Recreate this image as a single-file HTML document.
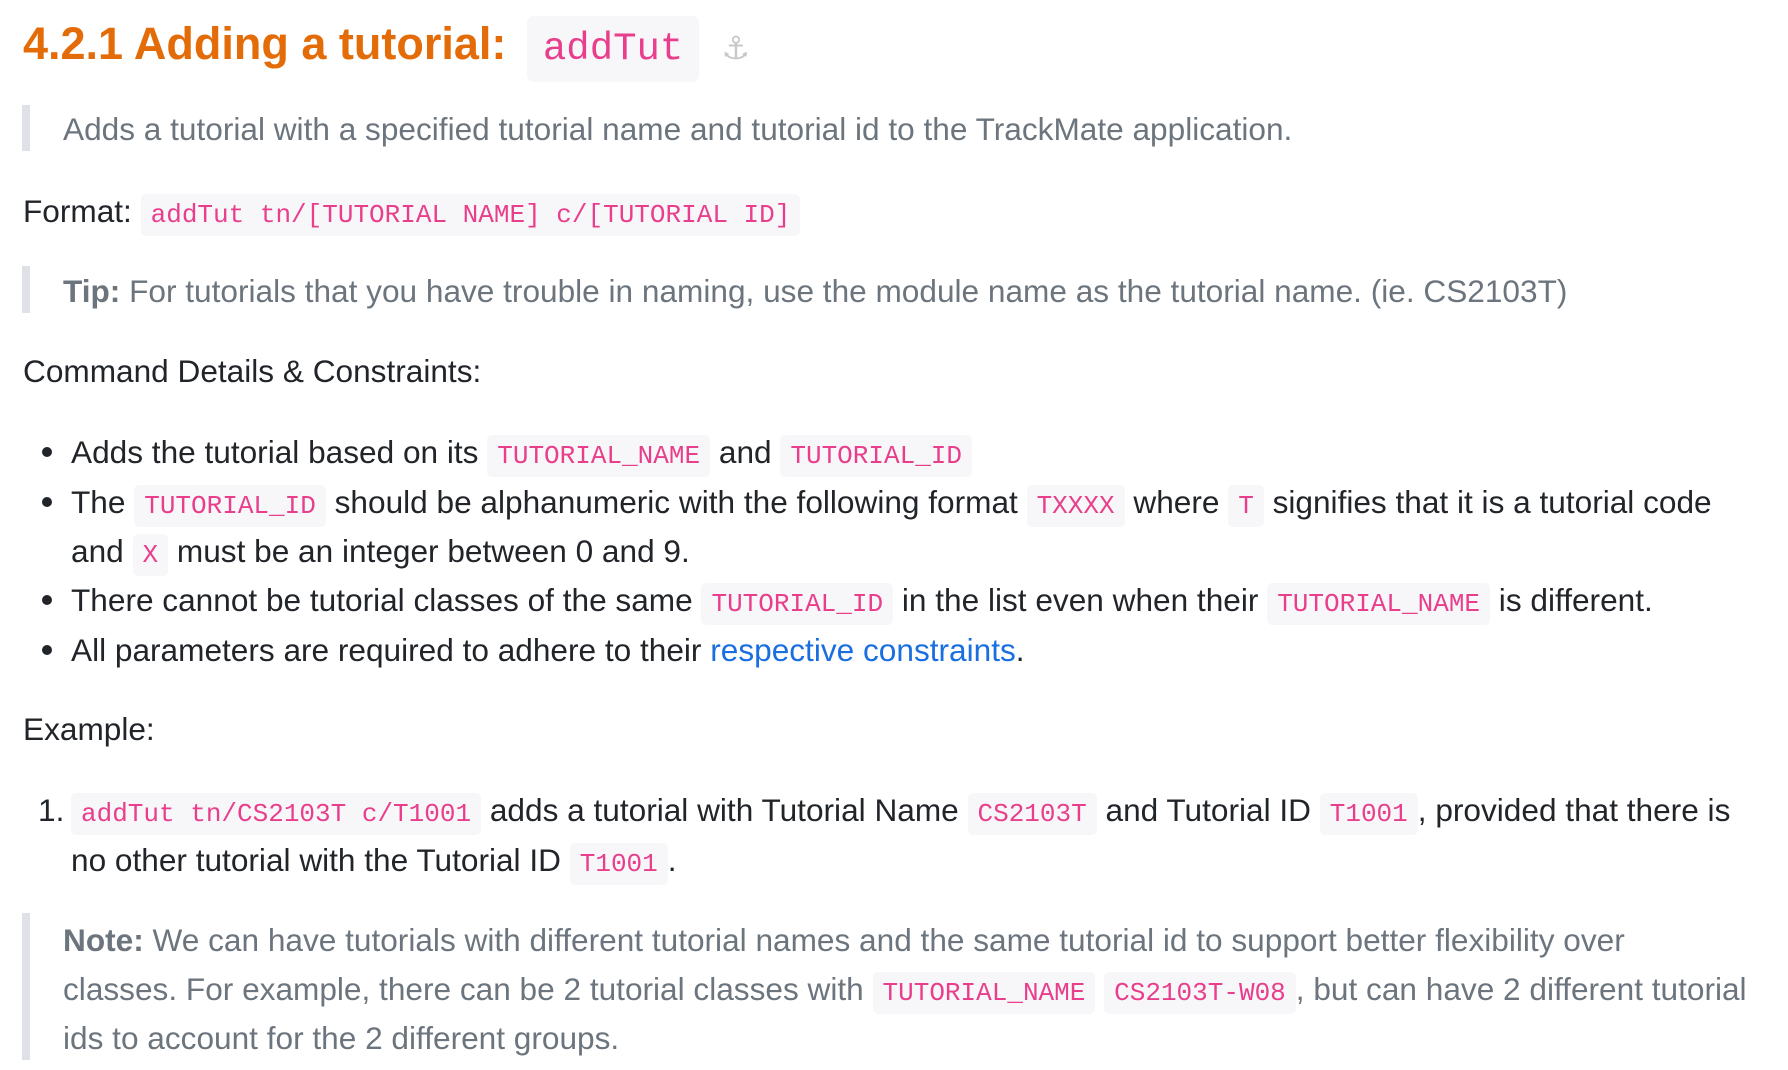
<!DOCTYPE html>
<html><head><meta charset="utf-8"><style>
body{margin:0;width:1788px;height:1070px;background:#fff;font-family:"Liberation Sans",sans-serif;color:#212529;position:relative;overflow:hidden}
.l{position:absolute;white-space:nowrap;font-size:31.6px;line-height:49px;height:49px}
code{font-family:"Liberation Mono",monospace;font-size:26px;color:#e83e8c;background:#f7f7f9;padding:6px 10px;border-radius:5px}
.g{color:#6c757d}
.bar{position:absolute;left:22px;width:8px;background:#dee2e6}
h1{position:absolute;left:23px;top:12px;margin:0;font-size:45px;line-height:64px;color:#e36c09;font-weight:bold;white-space:nowrap}
h1 code{font-size:39px;font-weight:normal;padding:11px 16px;border-radius:7px;margin-left:8px}
.anc{color:#c8c8c8;font-family:"DejaVu Sans",sans-serif;font-size:32px;font-weight:normal;margin-left:22px}
.dot{position:absolute;left:42px;width:10px;height:10px;border-radius:50%;background:#212529}
a{color:#1a6fe0;text-decoration:none}
</style></head><body>
<h1>4.2.1 Adding a tutorial: <code>addTut</code><span class="anc">⚓</span></h1>
<div class="bar" style="top:105px;height:46px"></div>
<div class="l g" style="left:63px;top:105px">Adds a tutorial with a specified tutorial name and tutorial id to the TrackMate application.</div>
<div class="l" style="left:23px;top:187px">Format: <code>addTut tn/[TUTORIAL NAME] c/[TUTORIAL ID]</code></div>
<div class="bar" style="top:266px;height:47px"></div>
<div class="l g" style="left:63px;top:267px"><b>Tip:</b> For tutorials that you have trouble in naming, use the module name as the tutorial name. (ie. CS2103T)</div>
<div class="l" style="left:23px;top:347px">Command Details &amp; Constraints:</div>
<div class="dot" style="top:447px"></div>
<div class="l" style="left:71px;top:428px">Adds the tutorial based on its <code>TUTORIAL_NAME</code> and <code>TUTORIAL_ID</code></div>
<div class="dot" style="top:497px"></div>
<div class="l" style="left:71px;top:478px">The <code>TUTORIAL_ID</code> should be alphanumeric with the following format <code>TXXXX</code> where <code>T</code> signifies that it is a tutorial code</div>
<div class="l" style="left:71px;top:527px">and <code>X</code> must be an integer between 0 and 9.</div>
<div class="dot" style="top:595px"></div>
<div class="l" style="left:71px;top:576px">There cannot be tutorial classes of the same <code>TUTORIAL_ID</code> in the list even when their <code>TUTORIAL_NAME</code> is different.</div>
<div class="dot" style="top:645px"></div>
<div class="l" style="left:71px;top:626px">All parameters are required to adhere to their <a>respective constraints</a>.</div>
<div class="l" style="left:23px;top:705px">Example:</div>
<div class="l" style="left:38px;top:786px">1.</div>
<div class="l" style="left:71px;top:786px"><code>addTut tn/CS2103T c/T1001</code> adds a tutorial with Tutorial Name <code>CS2103T</code> and Tutorial ID <code>T1001</code>, provided that there is</div>
<div class="l" style="left:71px;top:836px">no other tutorial with the Tutorial ID <code>T1001</code>.</div>
<div class="bar" style="top:913px;height:147px"></div>
<div class="l g" style="left:63px;top:916px"><b>Note:</b> We can have tutorials with different tutorial names and the same tutorial id to support better flexibility over</div>
<div class="l g" style="left:63px;top:965px">classes. For example, there can be 2 tutorial classes with <code>TUTORIAL_NAME</code> <code>CS2103T-W08</code>, but can have 2 different tutorial</div>
<div class="l g" style="left:63px;top:1014px">ids to account for the 2 different groups.</div>
</body></html>
